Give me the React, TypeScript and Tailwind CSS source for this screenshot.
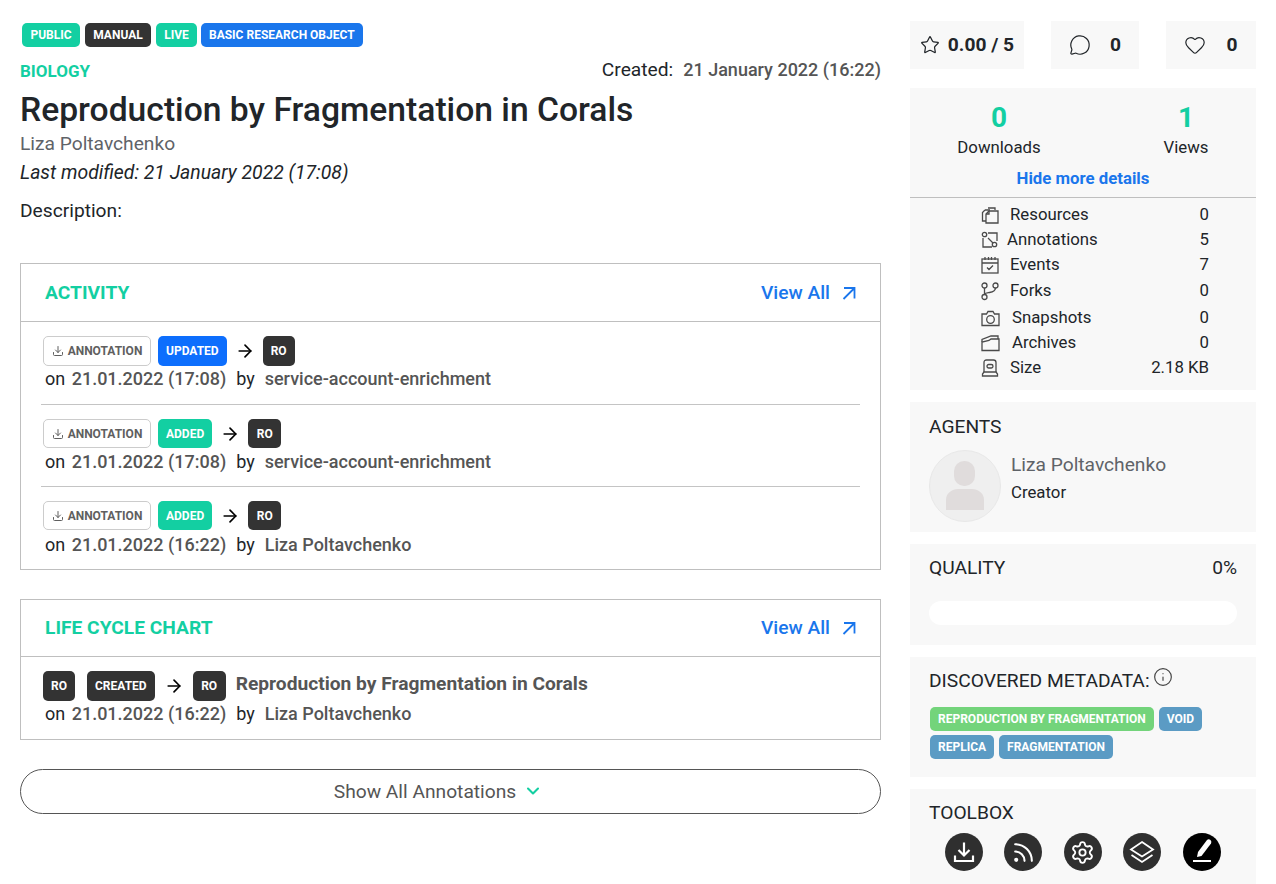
import { ArrowRight, ChevronDown, Download, Heart, Info, MessageCircle, Rss, Settings, Star } from "lucide-react";
import type { ReactNode } from "react";

function Tag({ children, className }: { children: ReactNode; className: string }) {
  return (
    <span className={`inline-flex items-center justify-center rounded-[5px] px-2 text-xs font-bold text-white ${className}`}>
      {children}
    </span>
  );
}

function ActivityRow({
  action,
  actionClass,
  date,
  user,
  first,
  last,
}: {
  action: string;
  actionClass: string;
  date: string;
  user: string;
  first?: boolean;
  last?: boolean;
}) {
  const height = first ? "h-[30px]" : "h-[29px]";
  const textGap = first ? "mt-[1px]" : last ? "mt-[3px]" : "mt-[2px]";
  const bottom = first ? "border-b border-[#c4c4c4] pb-[13px]" : last ? "pb-[12px]" : "border-b border-[#c4c4c4] pb-[12px]";
  return (
    <div className={`mx-5 pt-[14px] ${bottom}`}>
      <div className={`ml-[2px] flex items-center ${height}`}>
        <span className={`flex w-[108px] items-center justify-center gap-1 rounded-[5px] border border-[#cccccc] text-xs font-bold text-[#5f5f5f] ${height}`}>
          <Download size={12} strokeWidth={2} />
          ANNOTATION
        </span>
        <Tag className={`ml-[7px] ${height} ${actionClass}`}>{action}</Tag>
        <ArrowRight size={20} className="mx-2 text-black" strokeWidth={2} />
        <Tag className={`${first ? "w-8" : "w-[33px]"} ${height} bg-[#333333]`}>RO</Tag>
      </div>
      <div className={`ml-1 text-lg leading-[24px] text-[#212529] ${textGap}`}>
        on <span className="ml-[2px] font-medium text-[#555555]">{date}</span>
        <span className="ml-[10px]">by</span>
        <span className="ml-[10px] font-medium text-[#555555]">{user}</span>
      </div>
    </div>
  );
}

function CardHeader({ title, className }: { title: string; className: string }) {
  return (
    <div className={`flex items-center justify-between border-b border-[#bfbfbf] pl-6 pr-[24px] ${className}`}>
      <span className="text-[19.2px] font-bold text-[#13cfa2]">{title}</span>
      <span className="flex items-center gap-[12px] text-[19.2px] font-medium text-[#1a76ec]">
        View All
        <svg width="14" height="14" viewBox="0 0 14 14" fill="none" stroke="currentColor" strokeWidth="1.8">
          <path d="M2 2h10.500v10.500M12.500 2L1.500 13" />
        </svg>
      </span>
    </div>
  );
}

const iconProps = {
  width: 18,
  height: 18,
  viewBox: "0 0 18 18",
  fill: "none",
  stroke: "#4a4a4a",
  strokeWidth: 1.3,
  className: "overflow-visible",
};

const details: { icon: ReactNode; label: string; value: string; gap: string; row: string }[] = [
  {
    icon: (
      <svg {...iconProps}>
        <path d="M7 2h7v2M4 4h5M4 4L1.500 6.500V15H5" />
        <path d="M8 5h9v12H5V8z" />
        <path d="M5 8h3V5" />
      </svg>
    ),
    label: "Resources",
    value: "0",
    gap: "ml-[11px]",
    row: "",
  },
  {
    icon: (
      <svg {...iconProps}>
        <path d="M7 2h9v8M11 16H2V7" />
        <path d="M7 7l5 5" />
        <circle cx="3.500" cy="3.500" r="2.200" />
        <circle cx="13.500" cy="13.500" r="2.200" />
      </svg>
    ),
    label: "Annotations",
    value: "5",
    gap: "ml-[8px]",
    row: "",
  },
  {
    icon: (
      <svg {...iconProps}>
        <rect x="1" y="3" width="16" height="14" />
        <path d="M1 7h16M4 1v3M7.500 1v3M10.500 1v3M14 1v3M6 11.500l2 2 4-4" />
      </svg>
    ),
    label: "Events",
    value: "7",
    gap: "ml-[11px]",
    row: "",
  },
  {
    icon: (
      <svg {...iconProps}>
        <circle cx="3.500" cy="3.500" r="2.500" />
        <circle cx="14.500" cy="3.500" r="2.500" />
        <circle cx="3.500" cy="15" r="2.500" />
        <path d="M3.500 6v6.500M14.500 6c0 3.500-3 4-6 4.500-2.500.4-5 .5-5 2" />
      </svg>
    ),
    label: "Forks",
    value: "0",
    gap: "ml-[11px]",
    row: "mt-[1px]",
  },
  {
    icon: (
      <svg {...iconProps} width={19} viewBox="0 0 19 18">
        <path d="M1 5h4.500l1.500-2.500h5L13.500 5H18v11.500H1z" />
        <circle cx="9.500" cy="10.500" r="3.800" />
      </svg>
    ),
    label: "Snapshots",
    value: "0",
    gap: "ml-[13px]",
    row: "mt-[2px]",
  },
  {
    icon: (
      <svg {...iconProps} width={19} viewBox="0 0 19 18">
        <path d="M1 16.500V8l7-1.500 2-1.500h8v11.500z" />
        <path d="M1 8V5.500L10 2h7v3" />
      </svg>
    ),
    label: "Archives",
    value: "0",
    gap: "ml-[13px]",
    row: "",
  },
  {
    icon: (
      <svg {...iconProps}>
        <path d="M3 13V3.500Q3 1 5.500 1h7Q15 1 15 3.500V13" />
        <path d="M3 13L1.500 15v2h15v-2L15 13z" />
        <rect x="6" y="5.500" width="6" height="3.500" rx="1.700" />
      </svg>
    ),
    label: "Size",
    value: "2.18 KB",
    gap: "ml-[11px]",
    row: "",
  },
];

function ToolButton({ children, black }: { children: ReactNode; black?: boolean }) {
  return (
    <span className={`flex h-[38px] w-[38px] items-center justify-center rounded-full text-white ${black ? "bg-black" : "bg-[#2f2f2f]"}`}>
      {children}
    </span>
  );
}

export default function App() {
  return (
    <div className="flex h-[884px] w-[1276px] overflow-hidden bg-white font-['Roboto',sans-serif] text-[#212529]">
      {/* Main column */}
      <div className="ml-5 w-[861px] pt-[23px]">
        <div className="ml-[2px] flex gap-[5px]">
          <Tag className="h-6 w-[58px] bg-[#13cfa2]">PUBLIC</Tag>
          <Tag className="h-6 w-[66px] bg-[#333333]">MANUAL</Tag>
          <Tag className="h-6 w-[41px] bg-[#13cfa2]">LIVE</Tag>
          <Tag className="-ml-[1px] h-6 bg-[#1a76ec]">BASIC RESEARCH OBJECT</Tag>
        </div>
        <div className="mt-[11px] flex h-[25px] items-start justify-between">
          <span className="text-[17px] leading-[26px] font-bold text-[#13cfa2]">BIOLOGY</span>
          <span className="-mt-[2px] text-[19.2px]">
            Created:
            <span className="ml-[10px] text-lg font-medium text-[#555555]">21 January 2022 (16:22)</span>
          </span>
        </div>
        <h1 className="mt-[7px] text-[33.65px] leading-[40px] font-medium">Reproduction by Fragmentation in Corals</h1>
        <div className="mt-[1px] text-[19.2px] leading-[26px] text-[#5f6368]">Liza Poltavchenko</div>
        <div className="mt-[2px] text-[19.4px] leading-[28px] italic">Last modified: 21 January 2022 (17:08)</div>
        <div className="mt-[11px] text-[19.2px] leading-[26px]">Description:</div>

        <section className="mt-[39px] border border-[#bfbfbf]">
          <CardHeader title="ACTIVITY" className="h-[58px] pt-[1px]" />
          <ActivityRow first action="UPDATED" actionClass="bg-[#0d6efd]" date="21.01.2022 (17:08)" user="service-account-enrichment" />
          <ActivityRow action="ADDED" actionClass="bg-[#13cfa2]" date="21.01.2022 (17:08)" user="service-account-enrichment" />
          <ActivityRow action="ADDED" actionClass="bg-[#13cfa2]" date="21.01.2022 (16:22)" user="Liza Poltavchenko" last />
        </section>

        <section className="mt-[29px] border border-[#bfbfbf]">
          <CardHeader title="LIFE CYCLE CHART" className="h-[57px]" />
          <div className="px-[22px] pt-[14px] pb-[13px]">
            <div className="flex h-[30px] items-center">
              <Tag className="h-[30px] w-8 bg-[#333333]">RO</Tag>
              <Tag className="ml-[12px] h-[30px] bg-[#333333]">CREATED</Tag>
              <ArrowRight size={20} className="mx-[9px] text-black" strokeWidth={2} />
              <Tag className="h-[30px] w-[33px] bg-[#333333]">RO</Tag>
              <span className="ml-[10px] -mt-[4px] text-[19.2px] font-bold text-[#555555]">Reproduction by Fragmentation in Corals</span>
            </div>
            <div className="ml-[2px] mt-[1px] text-lg leading-[24px]">
              on <span className="ml-[2px] font-medium text-[#555555]">21.01.2022 (16:22)</span>
              <span className="ml-[10px]">by</span>
              <span className="ml-[10px] font-medium text-[#555555]">Liza Poltavchenko</span>
            </div>
          </div>
        </section>

        <button className="mt-[29px] flex h-[45px] w-full items-center justify-center gap-[7px] rounded-full border border-[#555555] pt-[1px] pr-[24px] text-[19.2px] text-[#555555]">
          Show All Annotations
          <ChevronDown size={20} strokeWidth={2.5} className="-mt-[2px] text-[#13cfa2]" />
        </button>
      </div>

      {/* Side column */}
      <aside className="ml-[29px] w-[346px] pt-[21px]">
        <div className="flex justify-between">
          <div className="flex h-12 w-[114px] items-center justify-center gap-[8px] bg-[#f8f8f8] text-[19.2px] font-bold">
            <Star size={20} strokeWidth={1.5} /> 0.00 / 5
          </div>
          <div className="flex h-12 w-[88px] items-center justify-center gap-[19px] bg-[#f8f8f8] text-[19.2px] font-bold">
            <MessageCircle size={22} strokeWidth={1.3} /> 0
          </div>
          <div className="flex h-12 w-[90px] items-center justify-center gap-[20px] bg-[#f8f8f8] text-[19.2px] font-bold">
            <Heart size={22} strokeWidth={1.3} /> 0
          </div>
        </div>

        <div className="mt-[19px] h-[302px] bg-[#f8f8f8]">
          <div className="h-[110px] border-b border-[#bfbfbf] pt-[12px]">
            <div className="flex text-center">
              <div className="ml-[47px] w-[84px]">
                <div className="text-[28px] leading-[36px] font-bold text-[#13cfa2]">0</div>
                <div className="-mt-[1px] text-[16.8px] leading-[24px]">Downloads</div>
              </div>
              <div className="ml-[113px] w-[64px]">
                <div className="text-[28px] leading-[36px] font-bold text-[#13cfa2]">1</div>
                <div className="-mt-[1px] text-[16.8px] leading-[24px]">Views</div>
              </div>
            </div>
            <div className="mt-[7px] text-center text-[16.8px] leading-[24px] font-bold text-[#1a76ec]">Hide more details</div>
          </div>
          <div className="ml-[71px] mr-[47px] mt-[4px]">
            {details.map((d) => (
              <div key={d.label} className={`flex h-[25px] items-center text-[16.8px] ${d.row}`}>
                <span className="flex w-[18px]">{d.icon}</span>
                <span className={d.gap}>{d.label}</span>
                <span className="ml-auto">{d.value}</span>
              </div>
            ))}
          </div>
        </div>

        <div className="mt-3 h-[130px] bg-[#f8f8f8] px-[19px] pt-[12px]">
          <div className="text-[19.2px] leading-[26px]">AGENTS</div>
          <div className="mt-[10px] flex">
            <div className="flex h-[72px] w-[72px] items-center justify-center rounded-full border border-[#e8e8e8] bg-[#efefef]">
              <svg width="40" height="50" viewBox="0 0 40 50" fill="#e0dcdc">
                <rect x="9" y="0" width="21" height="25" rx="10" />
                <path d="M1 49V39c0-7 6-11 12-11h14c6 0 12 4 12 11v10z" />
              </svg>
            </div>
            <div className="ml-[10px] pt-[2px]">
              <div className="text-[19.2px] leading-[26px] text-[#5f6368]">Liza Poltavchenko</div>
              <div className="mt-[1px] text-[16.8px] leading-[26px]">Creator</div>
            </div>
          </div>
        </div>

        <div className="mt-3 h-[101px] bg-[#f8f8f8] px-[19px] pt-[11px]">
          <div className="flex justify-between text-[19.2px] leading-[26px]">
            <span>QUALITY</span>
            <span>0%</span>
          </div>
          <div className="mt-[20px] h-6 rounded-full bg-white" />
        </div>

        <div className="mt-3 h-[120px] bg-[#f8f8f8] px-[19px] pt-[11px]">
          <div className="flex items-start text-[19.2px] leading-[26px]">
            DISCOVERED METADATA:
            <Info size={20} strokeWidth={1.4} className="ml-[3px] mt-[-1px] text-[#444444]" />
          </div>
          <div className="ml-[1px] mt-[13px] flex flex-wrap gap-x-[5px] gap-y-1">
            <Tag className="h-6 bg-[#73d47b]">REPRODUCTION BY FRAGMENTATION</Tag>
            <Tag className="h-6 bg-[#5b9bc4]">VOID</Tag>
            <Tag className="h-6 bg-[#5b9bc4]">REPLICA</Tag>
            <Tag className="h-6 bg-[#5b9bc4]">FRAGMENTATION</Tag>
          </div>
        </div>

        <div className="mt-3 h-[100px] bg-[#f8f8f8] px-[19px] pt-[11px]">
          <div className="text-[19.2px] leading-[26px]">TOOLBOX</div>
          <div className="ml-[16px] mt-[7px] flex gap-[21.4px]">
            <ToolButton>
              <svg width="24" height="24" viewBox="0 0 24 24" fill="none" stroke="currentColor" strokeWidth="2.200">
                <path d="M12 2.500v13M6.500 10l5.500 5.500 5.500-5.500M3 15.500v5.500h18v-5.500" />
              </svg>
            </ToolButton>
            <ToolButton><Rss size={25} strokeWidth={2} /></ToolButton>
            <ToolButton><Settings size={25} strokeWidth={1.8} /></ToolButton>
            <ToolButton>
              <svg width="26" height="26" viewBox="0 0 26 26" fill="none" stroke="currentColor" strokeWidth="1.800">
                <path d="M13 3L24 10.500 13 17.500 2 10.500z" />
                <path d="M2.500 16l10.500 7 10.500-7" />
              </svg>
            </ToolButton>
            <ToolButton black>
              <svg width="28" height="28" viewBox="0 0 28 28" fill="white">
                <path d="M9 19l1-5L19 2q1.500-1.500 3.500 0 1.500 1.500.5 3.500L13.500 18z" />
                <rect x="5" y="22" width="18" height="2" />
              </svg>
            </ToolButton>
          </div>
        </div>
      </aside>
    </div>
  );
}
